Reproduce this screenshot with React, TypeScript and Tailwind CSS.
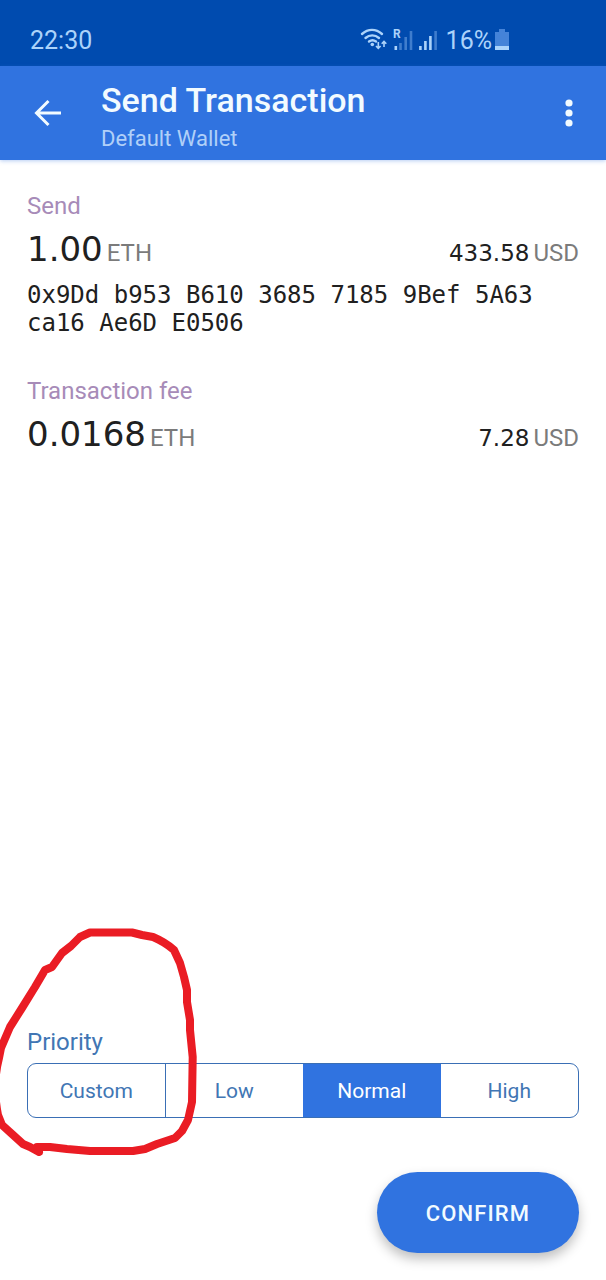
import React from "react";

interface AmountRowProps {
  label: string;
  value: string;
  fiat: string;
  address?: string;
}

const priorities = ["Custom", "Low", "Normal", "High"];

const StatusIcons: React.FC = () => (
  <svg width="78" height="26" viewBox="360 27 78 26" fill="none" aria-hidden="true">
    <g stroke="#acd3fa" strokeWidth="2.4" strokeLinecap="round">
      <path d="M362 33C368 27.500 376 27.500 382 33" />
      <path d="M365.5 37C369.5 33.500 375 33.500 379 37" />
      <path d="M369 40.500C371 39 374 39 376 40.500" />
    </g>
    <circle cx="372.3" cy="43.5" r="1.8" fill="#acd3fa" />
    <path
      d="M378.3 41V47M376 45l2.3 2.4L380.6 45M384 46V40.500M381.7 42.800l2.3-2.4 2.3 2.4"
      stroke="#acd3fa"
      strokeWidth="1.6"
    />
    <path d="M395.8 45v4" stroke="#acd3fa" strokeWidth="2.6" />
    <path d="M400.5 42v7M405.7 36v13M411 30v19" stroke="#3f7dcd" strokeWidth="2.6" />
    <path d="M420.4 45v4M425.4 40v9M430.4 35v14" stroke="#acd3fa" strokeWidth="2.6" />
    <path d="M435.6 30v19" stroke="#3f7dcd" strokeWidth="2.6" />
    <text x="393" y="36.5" fill="#acd3fa" fontSize="12" fontWeight="700" className="font-['Roboto',sans-serif]">
      R
    </text>
  </svg>
);

const BatteryIcon: React.FC = () => (
  <svg width="14" height="26" viewBox="0 0 14 26" aria-hidden="true">
    <path d="M4 1h6v3h4v14H0V4h4z" fill="#4583d8" />
    <path d="M0 18h14v4H0z" fill="#acd3fa" />
  </svg>
);

const AmountRow: React.FC<AmountRowProps> = ({ label, value, fiat, address }) => {
  return (
    <section>
      <h2 className="text-[24px] leading-8 text-[#a78bb8]">{label}</h2>
      <div className="flex h-14 items-baseline justify-between text-[24px] leading-[54px] text-[#7b7b7b]">
        <p className="flex items-baseline gap-1">
          <span className="font-['DejaVu_Sans',sans-serif] text-[34px] text-[#202020]">
            {value}
          </span>
          ETH
        </p>
        <p className="flex items-baseline gap-1">
          <span className="font-['DejaVu_Sans',sans-serif] text-[23px] text-[#202020]">
            {fiat}
          </span>
          USD
        </p>
      </div>
      {address && (
        <p className="mt-[3px] font-['DejaVu_Sans_Mono',monospace] text-[24px] leading-7 text-[#202020]">
          {address}
        </p>
      )}
    </section>
  );
};

const App: React.FC = () => {
  return (
    <div className="flex min-h-screen flex-col overflow-x-hidden bg-white font-['Roboto',sans-serif]">
      <div className="flex h-[66px] items-center bg-[#004baf] px-[30px] pt-4 text-[25px] text-[#acd3fa]">
        <span>22:30</span>
        <div className="ml-auto mr-[67px] flex items-center">
          <StatusIcons />
          <span className="ml-2 mr-[3px]">16%</span>
          <BatteryIcon />
        </div>
      </div>

      <header className="flex h-[94px] items-center bg-[#3073e0] pl-[34px] pr-[26px] text-[#f2fbff] shadow-[0_1px_4px_rgba(48,115,224,0.35)]">
        <button type="button" aria-label="Back">
          <svg width="28" height="28" viewBox="0 0 28 28" fill="none" stroke="currentColor" strokeWidth="3">
            <path d="M27 14H3M14.500 2L2.500 14L14.500 26" />
          </svg>
        </button>
        <div className="ml-[39px] pt-[6px]">
          <h1 className="text-[34px] font-medium leading-[46px]">Send Transaction</h1>
          <p className="text-[22px] leading-8 text-[#b0d0f8]">Default Wallet</p>
        </div>
        <button type="button" aria-label="More options" className="ml-auto">
          <svg width="22" height="30" viewBox="0 0 22 30" fill="currentColor">
            <circle cx="11" cy="5" r="3.600" />
            <circle cx="11" cy="15" r="3.600" />
            <circle cx="11" cy="25" r="3.600" />
          </svg>
        </button>
      </header>

      <main className="flex flex-1 flex-col px-[27px] pb-[27px] pt-[30px]">
        <div className="flex flex-col gap-[38px]">
          <AmountRow
            label="Send"
            value="1.00"
            fiat="433.58"
            address="0x9Dd b953 B610 3685 7185 9Bef 5A63 ca16 Ae6D E0506"
          />
          <AmountRow label="Transaction fee" value="0.0168" fiat="7.28" />
        </div>

        <fieldset className="relative mt-auto">
          <legend className="mb-[5px] text-[24px] leading-8 text-[#4176b4]">Priority</legend>
          <div className="grid h-[55px] grid-cols-4 overflow-hidden rounded-[9px] border border-[#3a6fb5]">
            {priorities.map((name) => (
              <label
                key={name}
                className="flex items-center justify-center pt-[2px] text-[21px] text-[#4176b4] first:border-r first:border-[#3a6fb5] has-checked:bg-[#3073e0] has-checked:text-white"
              >
                <input
                  type="radio"
                  name="priority"
                  value={name}
                  defaultChecked={name === "Normal"}
                  className="sr-only"
                />
                {name}
              </label>
            ))}
          </div>
          {/* hand-drawn marker around the custom option */}
          <svg
            className="pointer-events-none absolute -left-8 -top-[137px]"
            width="205"
            height="235"
            viewBox="-5 926 205 235"
            fill="none"
            stroke="#ea1c24"
            strokeWidth="8"
            strokeLinecap="round"
            strokeLinejoin="round"
            aria-hidden="true"
          >
            <path d="M90 932.500H132L142 935L153 937Q165 942 174 950L180 963L184 977L187 990V1002L190 1020V1030L192.700 1057L192 1102L188 1120L182 1131L175 1138L157 1144L145 1149L133 1151H90L67 1149L50 1147H37L39 1152L30 1147L23 1144L12 1134L2 1125L-2 1115Q-8 1085 -1 1058L1 1048L10 1027L22 1008L35 987L45 970L52 967L62 953L71 946L80 937Z" />
          </svg>
        </fieldset>

        <button
          type="button"
          className="mt-[54px] h-[81px] w-[202px] self-end rounded-full bg-[#3073e0] pt-[2px] text-[22px] font-medium tracking-wider text-[#f2fbff] shadow-[0_6px_12px_rgba(0,0,0,0.25)]"
        >
          CONFIRM
        </button>
      </main>
    </div>
  );
};

export default App;
